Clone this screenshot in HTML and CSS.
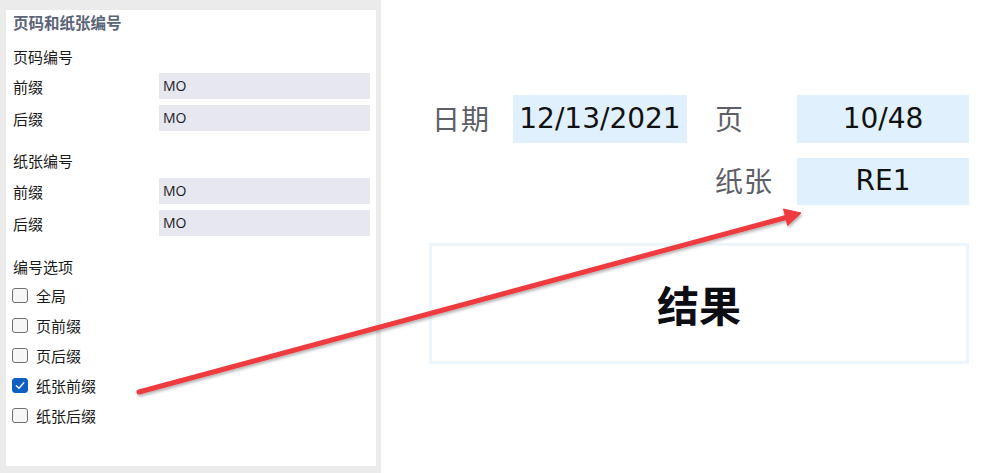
FILE: index.html
```html
<!DOCTYPE html>
<html lang="zh">
<head>
<meta charset="utf-8">
<link rel="stylesheet" href="styles.css">
</head>
<body>
<div class="page">
  <aside class="sidebar">
    <div class="panel">
      <div class="title">页码和纸张编号</div>
      <div class="heading h1">页码编号</div>
      <div class="field"><span class="lbl">前缀</span><span class="input">MO</span></div>
      <div class="field"><span class="lbl">后缀</span><span class="input">MO</span></div>
      <div class="heading h2">纸张编号</div>
      <div class="field"><span class="lbl">前缀</span><span class="input">MO</span></div>
      <div class="field"><span class="lbl">后缀</span><span class="input">MO</span></div>
      <div class="heading h3">编号选项</div>
      <div class="checks">
        <div class="check"><span class="box"></span><span>全局</span></div>
        <div class="check"><span class="box"></span><span>页前缀</span></div>
        <div class="check"><span class="box"></span><span>页后缀</span></div>
        <div class="check"><span class="box on"><svg viewBox="0 0 16 15" width="16" height="15"><path d="M4.3 7.8 L7 10.2 L11.8 4.8" fill="none" stroke="#fff" stroke-width="1.3" stroke-linecap="round" stroke-linejoin="round"/></svg></span><span>纸张前缀</span></div>
        <div class="check"><span class="box"></span><span>纸张后缀</span></div>
      </div>
    </div>
  </aside>
  <main class="preview">
    <div class="grid">
      <div class="plabel">日期</div>
      <div class="pbox">12/13/2021</div>
      <div class="plabel mid">页</div>
      <div class="pbox">10/48</div>
      <div class="plabel mid span3">纸张</div>
      <div class="pbox">RE1</div>
    </div>
    <div class="result">结果</div>
  </main>
</div>
<svg class="arrow" width="1001" height="473" viewBox="0 0 1001 473">
  <defs>
    <filter id="sh" x="-10%" y="-50%" width="120%" height="200%">
      <feDropShadow dx="1" dy="2" stdDeviation="1.5" flood-color="#000" flood-opacity="0.3"/>
    </filter>
  </defs>
  <g filter="url(#sh)" fill="#ee3b3f" stroke="#ee3b3f">
    <line x1="139" y1="392" x2="788" y2="217" stroke-width="5" stroke-linecap="round"/>
    <polygon points="801,213 787.7,225.5 783.5,209" stroke-width="1" stroke-linejoin="round"/>
  </g>
</svg>
</body>
</html>
```
FILE: styles.css
```css
* { box-sizing: border-box; }
html, body { margin: 0; padding: 0; background: #fff; }
body {
  width: 1001px;
  height: 473px;
  overflow: hidden;
  position: relative;
  font-family: "Noto Sans CJK SC", "Noto Sans", sans-serif;
  color: #1a1a1a;
}
.page { display: flex; height: 473px; }

.sidebar {
  width: 381px;
  background: #ebebeb;
  padding: 10px 5px 7px 6px;
  flex: none;
}
.panel {
  background: #fff;
  height: 456px;
  padding: 0 6px 0 7px;
  font-size: 15px;
}
.title {
  height: 24px;
  line-height: 24px;
  font-size: 15.5px;
  font-weight: 700;
  color: #5b6477;
}
.heading { height: 24px; line-height: 24px; }
.h1 { margin-top: 11px; margin-bottom: 4px; }
.h2 { margin-top: 18px; margin-bottom: 5px; }
.h3 { margin-top: 19px; margin-bottom: 1px; }
.field {
  display: flex;
  align-items: center;
  height: 26px;
  margin-bottom: 6px;
}
.lbl { width: 146px; flex: none; }
.input {
  flex: 1;
  height: 26px;
  line-height: 26px;
  background: #e7e7f0;
  padding-left: 4px;
  font-family: "Open Sans", "Liberation Sans", sans-serif;
  font-size: 14px;
  color: #1a1a1a;
}
.checks { display: flex; flex-direction: column; }
.check {
  display: flex;
  align-items: center;
  height: 30px;
  gap: 8px;
}
.box {
  width: 16px;
  height: 15px;
  border: 1px solid #707070;
  border-radius: 3px;
  background: #f6f6f6;
  margin-left: -1px;
  flex: none;
  display: flex;
}
.box.on {
  background: #0f5fc2;
  border-color: #0f5fc2;
}
.box svg { margin: -1px; }

.preview {
  flex: 1;
  padding: 95px 0 0 48px;
}
.grid {
  display: grid;
  grid-template-columns: 84px 174px 110px 172px;
  grid-template-rows: 48px 47px;
  row-gap: 15px;
  width: 540px;
}
.plabel {
  display: flex;
  align-items: center;
  padding-left: 3px;
  padding-bottom: 3px;
  font-size: 28px;
  color: #5e5e66;
  letter-spacing: 1px;
}
.plabel.mid { padding-left: 28px; }
.span3 { grid-column: 3; }
.pbox {
  background: #e0f1fd;
  display: flex;
  align-items: center;
  justify-content: center;
  font-family: "DejaVu Sans", sans-serif;
  font-size: 28px;
  color: #111;
  padding-bottom: 2px;
}
.result {
  margin-top: 38px;
  width: 540px;
  height: 121px;
  border: 3px solid #eef6fd;
  display: flex;
  align-items: center;
  justify-content: center;
  font-size: 42px;
  font-weight: 700;
  color: #0d0d14;
}

.arrow {
  position: absolute;
  left: 0;
  top: 0;
  pointer-events: none;
}
```
